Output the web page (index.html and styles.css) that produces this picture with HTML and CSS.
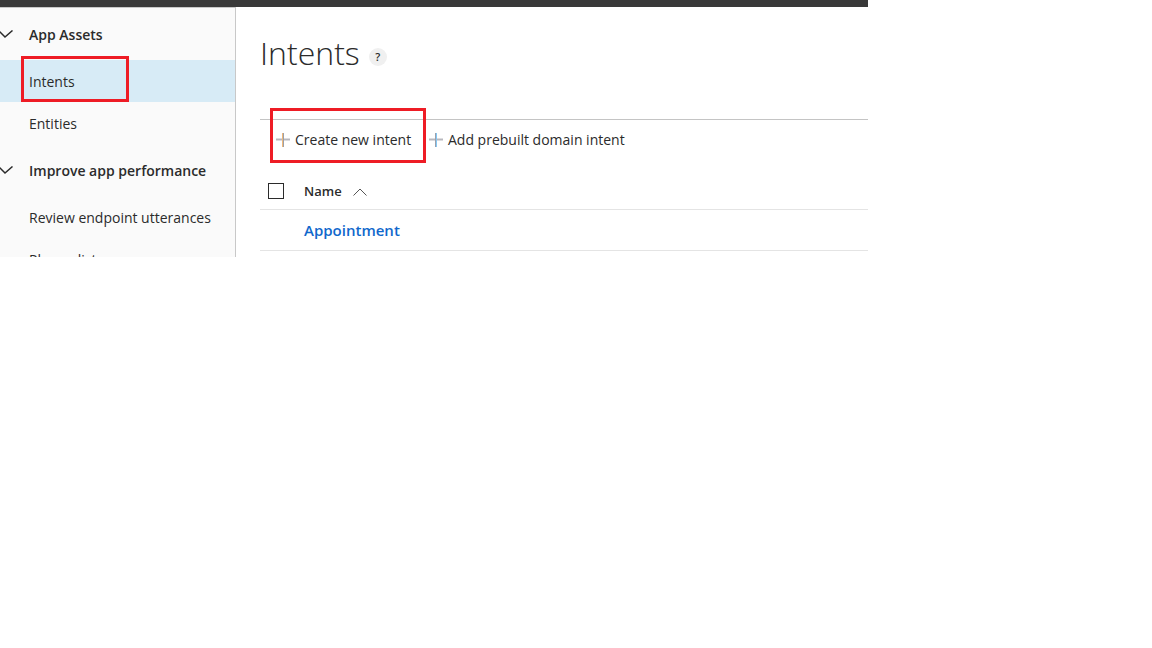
FILE: index.html
```html
<!DOCTYPE html>
<html lang="en">
<head>
<meta charset="utf-8">
<meta name="viewport" content="width=device-width, initial-scale=1">
<title>Intents</title>
<link rel="stylesheet" href="styles.css">
</head>
<body>
<div class="app">
  <header class="topbar"></header>
  <div class="shell">
    <nav class="sidebar" aria-label="App">
      <button class="group" type="button">
        <svg class="chevron" viewBox="0 0 14 10" aria-hidden="true"><path d="M-1 1L5 7L12.5 0.5"/></svg>
        App Assets
      </button>
      <a class="item item-active" href="#intents"><span class="item-mark">Intents</span></a>
      <a class="item" href="#entities">Entities</a>
      <button class="group" type="button">
        <svg class="chevron" viewBox="0 0 14 10" aria-hidden="true"><path d="M-1 1L5 7L12.5 0.5"/></svg>
        Improve app performance
      </button>
      <a class="item" href="#review">Review endpoint utterances</a>
      <a class="item" href="#phrases">Phrase lists</a>
    </nav>
    <main class="content">
      <div class="heading">
        <h1 class="title">Intents</h1>
        <button class="help" type="button">?</button>
      </div>
      <div class="toolbar">
        <button class="action action-mark" type="button">
          <svg class="plus" viewBox="0 0 14 14" aria-hidden="true"><path class="plus-h" d="M0 6.5H14"/><path class="plus-warm" d="M6.5 0V14"/><path class="plus-edge" d="M7.5 0V14"/></svg>
          Create new intent
        </button>
        <button class="action" type="button">
          <svg class="plus" viewBox="0 0 14 14" aria-hidden="true"><path class="plus-h" d="M0 6.5H14"/><path class="plus-edge" d="M6.5 0V14"/><path class="plus-cool" d="M7.5 0V14"/></svg>
          Add prebuilt domain intent
        </button>
      </div>
      <table class="intents">
        <thead>
          <tr>
            <th class="pick"><input class="check" type="checkbox" aria-label="Select all intents"></th>
            <th class="name">Name <svg class="caret" viewBox="0 0 14 8" aria-hidden="true"><path d="M0.5 7.5L7 1L13.5 7.5"/></svg></th>
          </tr>
        </thead>
        <tbody>
          <tr>
            <td class="pick"></td>
            <td class="name"><a class="intent" href="#appointment">Appointment</a></td>
          </tr>
        </tbody>
      </table>
    </main>
  </div>
</div>
</body>
</html>
```
FILE: styles.css
```css
* {
  box-sizing: border-box;
}

body {
  margin: 0;
  background: #fff;
  color: #2b2b2b;
  font-family: "Open Sans", "Noto Sans", sans-serif;
  font-size: 14px;
  line-height: 20px;
}

button {
  border: 0;
  background: none;
  color: inherit;
  font: inherit;
  cursor: pointer;
}

a {
  text-decoration: none;
}

.app {
  margin-right: 284px;
}

.topbar {
  height: 7px;
  background: #393939;
}

.shell {
  display: flex;
  max-height: 250px;
  overflow: hidden;
}

.sidebar {
  flex: 0 0 236px;
  border-top: 1px solid #c8c8c8;
  border-right: 1px solid #c8c8c8;
  background: #fafafa;
}

.group {
  display: flex;
  align-items: center;
  gap: 15px;
  width: 100%;
  height: 52px;
  padding: 2px 0 0;
  font-weight: 600;
}

.chevron {
  width: 14px;
  height: 10px;
  fill: none;
  stroke: #2b2b2b;
  stroke-width: 1.5;
}

.item {
  display: flex;
  align-items: center;
  height: 42px;
  padding: 2px 0 0 29px;
  color: #2b2b2b;
}

.item-active {
  padding: 0 0 0 21px;
  background: #d7ebf6;
}

.item-mark {
  display: flex;
  align-items: center;
  width: 108px;
  height: 46px;
  margin-top: -4px;
  padding: 6px 0 0 5px;
  border: 3px solid #ee1c25;
}

.content {
  flex: 1;
  min-width: 0;
  padding: 23px 0 0 24px;
}

.heading {
  display: flex;
  align-items: center;
  gap: 9px;
  height: 89px;
  padding-bottom: 44px;
}

.title {
  margin: 0;
  font-size: 32px;
  font-weight: 300;
  line-height: 44px;
}

.help {
  width: 18px;
  height: 18px;
  margin-top: 8px;
  padding: 0;
  border-radius: 50%;
  background: #f0f0f0;
  font-size: 11px;
  font-weight: 600;
  line-height: 18px;
}

.toolbar {
  display: flex;
  align-items: center;
  height: 53px;
  padding-left: 10px;
  border-top: 1px solid #c4c4c4;
}

.action {
  display: flex;
  align-items: center;
  gap: 5px;
  height: 55px;
  margin-top: -22px;
  padding: 10px 3px 0;
  font-size: 14px;
  white-space: nowrap;
}

.action-mark {
  width: 156px;
  border: 3px solid #ee1c25;
}

.plus {
  width: 14px;
  height: 14px;
  fill: none;
}

.plus-h {
  stroke: #b8b8be;
  stroke-width: 2;
}

.plus-warm {
  stroke: #f0b878;
}

.plus-cool {
  stroke: #84c8f4;
}

.plus-edge {
  stroke: #9aa0ac;
}

.intents {
  width: 100%;
  border-collapse: separate;
  border-spacing: 0;
}

.intents th,
.intents td {
  border-bottom: 1px solid #e4e4e4;
  text-align: left;
}

.intents th {
  height: 38px;
  padding: 0;
  font-size: 13px;
  font-weight: 600;
}

.intents td {
  height: 41px;
  padding: 0;
}

.intents .pick {
  width: 44px;
  padding-left: 8px;
}

.check {
  display: block;
  width: 16px;
  height: 16px;
  margin: 0;
  border: 1px solid #2b2b2b;
  background: #fff;
  appearance: none;
}

.caret {
  width: 14px;
  height: 8px;
  margin-left: 8px;
  fill: none;
  stroke: #555;
  vertical-align: 0;
}

.intent {
  color: #1068cc;
  font-size: 15px;
  font-weight: 600;
}
```
